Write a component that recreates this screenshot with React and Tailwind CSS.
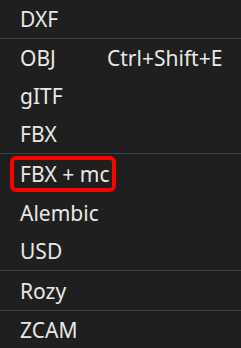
const groups = [
  [{ label: 'DXF', h: 'h-[38px]' }],
  [
    { label: 'OBJ', shortcut: 'Ctrl+Shift+E', h: 'h-[38px]' },
    { label: 'gITF', h: 'h-[38px]' },
    { label: 'FBX', h: 'h-[38px]' },
  ],
  [
    { label: 'FBX + mc', marked: true, h: 'h-[39px]' },
    { label: 'Alembic', h: 'h-[39px]' },
    { label: 'USD', h: 'h-[38px]' },
  ],
  [{ label: 'Rozy', h: 'h-[39px]' }],
  [{ label: 'ZCAM', h: 'h-[38px]' }],
];

function Row({ item }) {
  return (
    <div className={`flex items-center px-5 ${item.h}`}>
      <span className="relative w-[87px] shrink-0 whitespace-nowrap">
        {item.label}
        {item.marked && (
          <span className="absolute -left-[10px] -right-[9px] -top-[4px] -bottom-[4px] rounded-[6px] border-4 border-[#ff0000]" />
        )}
      </span>
      {item.shortcut && <span className="whitespace-nowrap">{item.shortcut}</span>}
    </div>
  );
}

export default function App() {
  return (
    <div
      className="w-[241px] h-[348px] overflow-hidden bg-[#1f1f1f] text-[#e8e8e8] text-[21px] leading-[28px]"
      style={{ fontFamily: '"Noto Sans", sans-serif' }}
    >
      {groups.map((g, i) => (
        <div key={i} className={i > 0 ? 'border-t border-[#3a3c4c]' : ''}>
          {g.map(item => (
            <Row key={item.label} item={item} />
          ))}
        </div>
      ))}
    </div>
  );
}
